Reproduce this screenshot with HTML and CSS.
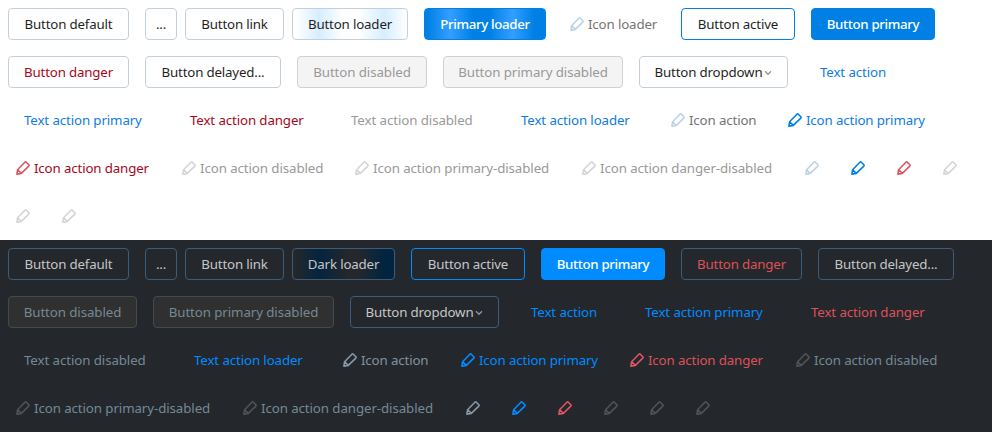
FILE: index.html
```html
<!DOCTYPE html>
<html lang="en">
<head>
<meta charset="utf-8">
<title>Buttons</title>
<link rel="stylesheet" href="styles.css">
</head>
<body>
<svg class="defs" aria-hidden="true">
  <symbol id="pencil" viewBox="0 0 14 14"><path d="M.9 13.1 1.6 8.7 8.9 1.2Q9.6.6 10.3 1.2L12.8 3.7Q13.4 4.4 12.8 5.1L5.3 12.4ZM1.6 8.7 5.3 12.4"/></symbol>
  <symbol id="chevron" viewBox="0 0 8 6"><path d="M1 1.2 4 4.2 7 1.2"/></symbol>
</svg>
<section class="theme light">
  <div class="row">
    <a class="btn w121"><span>Button default</span></a>
    <a class="btn more"><span>...</span></a>
    <a class="btn w99 tight"><span>Button link</span></a>
    <a class="btn loader w116"><span>Button loader</span></a>
    <a class="btn primary loader w122"><span>Primary loader</span></a>
    <a class="icon w103"><svg><use href="#pencil"/></svg><span>Icon loader</span></a>
    <a class="btn active w114"><span>Button active</span></a>
    <a class="btn primary w124"><span>Button primary</span></a>
  </div>
  <div class="row">
    <a class="btn danger w121"><span>Button danger</span></a>
    <a class="btn w136"><span>Button delayed...</span></a>
    <a class="btn disabled w130"><span>Button disabled</span></a>
    <a class="btn disabled w180"><span>Button primary disabled</span></a>
    <a class="btn w149"><span>Button dropdown</span><svg class="chevron"><use href="#chevron"/></svg></a>
    <a class="text w99"><span>Text action</span></a>
  </div>
  <div class="row">
    <a class="text w150"><span>Text action primary</span></a>
    <a class="text danger w145"><span>Text action danger</span></a>
    <a class="text disabled w154"><span>Text action disabled</span></a>
    <a class="text w142"><span>Text action loader</span></a>
    <a class="icon w101"><svg><use href="#pencil"/></svg><span>Icon action</span></a>
    <a class="icon primary w154"><svg><use href="#pencil"/></svg><span>Icon action primary</span></a>
  </div>
  <div class="row">
    <a class="icon danger w150"><svg><use href="#pencil"/></svg><span>Icon action danger</span></a>
    <a class="icon disabled w157"><svg><use href="#pencil"/></svg><span>Icon action disabled</span></a>
    <a class="icon disabled w211"><svg><use href="#pencil"/></svg><span>Icon action primary-disabled</span></a>
    <a class="icon disabled w207"><svg><use href="#pencil"/></svg><span>Icon action danger-disabled</span></a>
    <a class="icon"><svg><use href="#pencil"/></svg></a>
    <a class="icon primary"><svg><use href="#pencil"/></svg></a>
    <a class="icon danger"><svg><use href="#pencil"/></svg></a>
    <a class="icon disabled"><svg><use href="#pencil"/></svg></a>
  </div>
  <div class="row">
    <a class="icon disabled"><svg><use href="#pencil"/></svg></a>
    <a class="icon disabled"><svg><use href="#pencil"/></svg></a>
  </div>
</section>
<section class="theme dark">
  <div class="row">
    <a class="btn w121"><span>Button default</span></a>
    <a class="btn more"><span>...</span></a>
    <a class="btn w99 tight"><span>Button link</span></a>
    <a class="btn loader w103"><span>Dark loader</span></a>
    <a class="btn active w114"><span>Button active</span></a>
    <a class="btn primary w124"><span>Button primary</span></a>
    <a class="btn danger w121"><span>Button danger</span></a>
    <a class="btn w136"><span>Button delayed...</span></a>
  </div>
  <div class="row">
    <a class="btn disabled w129"><span>Button disabled</span></a>
    <a class="btn disabled w181"><span>Button primary disabled</span></a>
    <a class="btn w149"><span>Button dropdown</span><svg class="chevron"><use href="#chevron"/></svg></a>
    <a class="text w98"><span>Text action</span></a>
    <a class="text w150"><span>Text action primary</span></a>
    <a class="text danger w145"><span>Text action danger</span></a>
  </div>
  <div class="row">
    <a class="text disabled w154"><span>Text action disabled</span></a>
    <a class="text w141"><span>Text action loader</span></a>
    <a class="icon w102"><svg><use href="#pencil"/></svg><span>Icon action</span></a>
    <a class="icon primary w153"><svg><use href="#pencil"/></svg><span>Icon action primary</span></a>
    <a class="icon danger w150"><svg><use href="#pencil"/></svg><span>Icon action danger</span></a>
    <a class="icon disabled w157"><svg><use href="#pencil"/></svg><span>Icon action disabled</span></a>
  </div>
  <div class="row">
    <a class="icon disabled w211"><svg><use href="#pencil"/></svg><span>Icon action primary-disabled</span></a>
    <a class="icon disabled w207"><svg><use href="#pencil"/></svg><span>Icon action danger-disabled</span></a>
    <a class="icon"><svg><use href="#pencil"/></svg></a>
    <a class="icon primary"><svg><use href="#pencil"/></svg></a>
    <a class="icon danger"><svg><use href="#pencil"/></svg></a>
    <a class="icon disabled"><svg><use href="#pencil"/></svg></a>
    <a class="icon disabled"><svg><use href="#pencil"/></svg></a>
    <a class="icon disabled"><svg><use href="#pencil"/></svg></a>
  </div>
</section>
</body>
</html>
```
FILE: styles.css
```css
* { box-sizing: border-box; }
body { margin: 0; font: 13.3px/30px "Noto Sans", sans-serif; background: #fff; }
.defs { position: absolute; width: 0; height: 0; }
.theme { padding: 8px; display: flex; flex-direction: column; gap: 16px; background: var(--bg); color: var(--fg); }
.light { height: 240px; --bg: #fff; --fg: #1f1f1f; --border: #c3d0dc; --primary: #0080e5; --link: #0f7be2; --danger: #a8071a; --icon-danger: #dd5560; --icon: #bbd3e7; --icon-text: #737373; --muted: #999; --muted-icon: #d5d5d5; --muted-bg: #f4f4f4; --muted-border: #d0d0d0; --chevron: #999; --wave: #d6edff; }
.dark { height: 192px; --bg: #24272c; --fg: #c4c6c7; --border: #3b5d7b; --primary: #008cff; --link: #008cff; --danger: #dd5259; --icon-danger: #dd5560; --icon: #8797a5; --icon-text: #82929e; --muted: #758995; --muted-icon: #505356; --muted-bg: #303030; --muted-border: #434b52; --chevron: #8797a5; --wave: #032440; }
.row { display: flex; gap: 16px; height: 32px; }
.row span { white-space: nowrap; letter-spacing: -.17px; }
.row .text span { letter-spacing: -.12px; }
.row .icon span { letter-spacing: -.14px; }
.row .disabled span { letter-spacing: -.09px; }
.btn, .text, .icon { display: flex; align-items: center; flex: none; height: 32px; }
.btn { justify-content: center; border: 1px solid var(--border); border-radius: 4px; }
.text { padding-left: 16px; color: var(--link); }
.icon { padding: 0 8px; gap: 4px; color: var(--icon-text); }
.icon svg { flex: none; width: 14px; height: 14px; fill: none; stroke: var(--icon); stroke-width: 1.6; stroke-linejoin: round; }
.more { width: 32px; }
.more, .tight { margin-right: -8px; }
.btn.danger, .text.danger, .icon.danger { color: var(--danger); }
.icon.danger svg { stroke: var(--icon-danger); }
.icon.primary { color: var(--link); }
.icon.primary svg { stroke: var(--primary); }
.text.disabled, .icon.disabled { color: var(--muted); }
.icon.disabled svg { stroke: var(--muted-icon); }
.btn.disabled { color: var(--muted); background: var(--muted-bg); border-color: var(--muted-border); }
.btn.active { border-color: var(--primary); }
.btn.primary { color: #fff; background: var(--primary); border-color: var(--primary); font-weight: 500; }
.row .btn.primary span { letter-spacing: -.35px; }
.btn.loader { background: linear-gradient(90deg, var(--bg) 3%, var(--wave) 23%, var(--bg) 44%, var(--bg) 58%, var(--wave) 80%, var(--bg) 100%); }
.btn.primary.loader { background: linear-gradient(90deg, #0080e5 2%, #339fff 21%, #0080e5 40%, #0080e5 54%, #339fff 73%, #0080e5 91%); }
.dark .btn.loader { background: linear-gradient(90deg, var(--bg) 3%, var(--wave) 26%, var(--bg) 53%, var(--bg) 66%, var(--wave) 89%, var(--wave) 100%); }
.chevron { width: 8px; height: 6px; margin: 2px 0 0 2px; fill: none; stroke: var(--chevron); stroke-width: 1.4; }
.w98 { width: 98px; }
.w99 { width: 99px; }
.w101 { width: 101px; }
.w102 { width: 102px; }
.w103 { width: 103px; }
.w114 { width: 114px; }
.w116 { width: 116px; }
.w121 { width: 121px; }
.w122 { width: 122px; }
.w124 { width: 124px; }
.w129 { width: 129px; }
.w130 { width: 130px; }
.w136 { width: 136px; }
.w141 { width: 141px; }
.w142 { width: 142px; }
.w145 { width: 145px; }
.w149 { width: 149px; }
.w150 { width: 150px; }
.w153 { width: 153px; }
.w154 { width: 154px; }
.w157 { width: 157px; }
.w180 { width: 180px; }
.w181 { width: 181px; }
.w207 { width: 207px; }
.w211 { width: 211px; }
```
